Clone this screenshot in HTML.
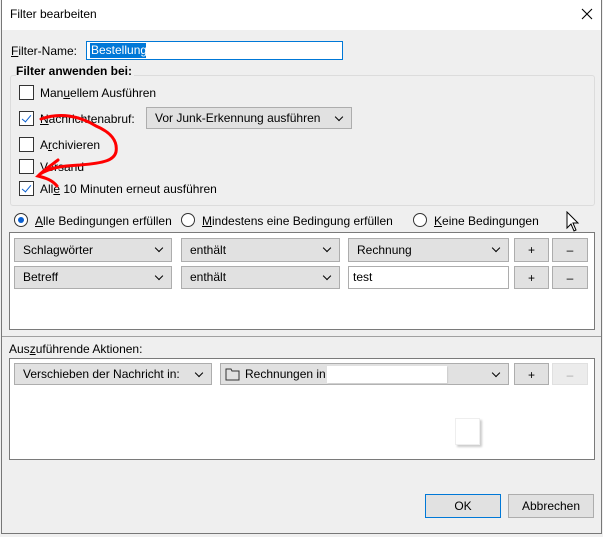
<!DOCTYPE html>
<html><head><meta charset="utf-8"><style>
*{box-sizing:border-box;margin:0;padding:0}
body{width:603px;height:537px;background:#f0f0f0;font-family:"Liberation Sans",sans-serif;font-size:12px;color:#000;position:relative;overflow:hidden}
.a{position:absolute}
.win{left:1px;top:0;width:601px;height:534px;background:#efefef;border:1px solid #777;border-top:none}
.title{left:2px;top:0;width:599px;height:30px;background:#fff}
.cb{width:15px;height:15px;border:1px solid #333;background:#fff}
.cb.c::after{content:"";position:absolute;left:4px;top:1px;width:4px;height:8px;border:solid #0a5fd0;border-width:0 1.5px 1.5px 0;transform:rotate(40deg)}
.dd{background:#e1e1e1;border:1px solid #adadad;padding-left:8px;line-height:21px;white-space:nowrap}
.dd::after{content:"";position:absolute;right:9px;top:6px;width:5px;height:5px;border:solid #000;border-width:0 1.6px 1.6px 0;transform:rotate(45deg)}
.btn{background:#e1e1e1;border:1px solid #adadad;text-align:center;line-height:22px}
.rad{width:14px;height:14px;border:1px solid #333;border-radius:50%;background:#fff}
u{text-decoration:underline}
</style></head><body>
<div class="a win"></div>
<div class="a title"></div>
<div class="a" style="left:10px;top:7px;font-size:12px">Filter bearbeiten</div>
<svg class="a" style="left:581px;top:8px" width="12" height="12"><path d="M1 1L11 11M11 1L1 11" stroke="#000" stroke-width="1.1"/></svg>
<div class="a" style="left:11px;top:44px"><u>F</u>ilter-Name:</div>
<div class="a" style="left:86px;top:41px;width:257px;height:19px;background:#fff;border:1px solid #0078d7"></div>
<div class="a" style="left:90px;top:43px;height:15px;width:56px;background:#0078d7;color:#fff;line-height:15px;padding-left:1px">Bestellung</div>
<div class="a" style="left:10px;top:75px;width:585px;height:131px;border:1px solid #dcdcdc;border-radius:3px"></div>
<div class="a" style="left:16px;top:64px;font-weight:bold;background:#efefef;padding-right:2px">Filter anwenden bei:</div>
<div class="a cb" style="left:19px;top:85px"></div><div class="a" style="left:40px;top:86px">Man<u>u</u>ellem Ausführen</div>
<div class="a cb c" style="left:19px;top:111px"></div><div class="a" style="left:40px;top:112px"><u>N</u>achrichtenabruf:</div>
<div class="a dd" style="left:146px;top:107px;width:206px;height:22px">Vor Junk-Erkennung ausführen</div>
<div class="a cb" style="left:19px;top:137px"></div><div class="a" style="left:40px;top:138px">A<u>r</u>chivieren</div>
<div class="a cb" style="left:19px;top:159px"></div><div class="a" style="left:40px;top:160px">Versand</div>
<div class="a cb c" style="left:19px;top:181px"></div><div class="a" style="left:40px;top:182px">All<u>e</u> 10 Minuten erneut ausführen</div>
<svg class="a" style="left:0;top:0" width="603" height="537"><path d="M41 119 C60 112 80 116 96 126 C110 132 118 140 116 152 C114 160 105 163 80 165 C60 166 50 168 40 174 M58 160 C50 166 44 170 38 176 C46 178 52 180 57 186" fill="none" stroke="#f00" stroke-width="3" stroke-linecap="round"/></svg>
<div class="a rad" style="left:14px;top:213px"><div class="a" style="left:3px;top:3px;width:6px;height:6px;border-radius:50%;background:#0a5fd0"></div></div>
<div class="a" style="left:35px;top:214px"><u>A</u>lle Bedingungen erfüllen</div>
<div class="a rad" style="left:181px;top:213px"></div><div class="a" style="left:202px;top:214px"><u>M</u>indestens eine Bedingung erfüllen</div>
<div class="a rad" style="left:413px;top:213px"></div><div class="a" style="left:434px;top:214px"><u>K</u>eine Bedingungen</div>
<svg class="a" style="left:566px;top:211px" width="14" height="22"><path d="M1 1V17L5 13L8 20L10 19L7 12H12Z" fill="#fff" stroke="#000"/></svg>
<div class="a" style="left:9px;top:232px;width:586px;height:98px;background:#fff;border:1px solid #7a7a7a"></div>
<div class="a dd" style="left:14px;top:238px;width:158px;height:24px;line-height:22px">Schlagwörter</div>
<div class="a dd" style="left:181px;top:238px;width:159px;height:24px;line-height:22px">enthält</div>
<div class="a dd" style="left:348px;top:238px;width:161px;height:24px;line-height:22px">Rechnung</div>
<div class="a btn" style="left:514px;top:238px;width:35px;height:24px">+</div>
<div class="a btn" style="left:552px;top:238px;width:36px;height:24px">–</div>
<div class="a dd" style="left:14px;top:266px;width:158px;height:23px">Betreff</div>
<div class="a dd" style="left:181px;top:266px;width:159px;height:23px">enthält</div>
<div class="a" style="left:348px;top:266px;width:161px;height:23px;background:#fff;border:1px solid #adadad;padding-left:4px;line-height:21px">test</div>
<div class="a btn" style="left:514px;top:266px;width:35px;height:23px">+</div>
<div class="a btn" style="left:552px;top:266px;width:36px;height:23px">–</div>
<div class="a" style="left:2px;top:336px;width:599px;height:1px;background:#a0a0a0"></div>
<div class="a" style="left:9px;top:342px">Aus<u>z</u>uführende Aktionen:</div>
<div class="a" style="left:9px;top:358px;width:586px;height:102px;background:#fff;border:1px solid #7a7a7a"></div>
<div class="a dd" style="left:14px;top:363px;width:198px;height:22px;line-height:20px">Verschieben der Nachricht in:</div>
<div class="a dd" style="left:220px;top:363px;width:289px;height:22px;line-height:20px;padding-left:24px">Rechnungen in</div>
<svg class="a" style="left:225px;top:368px" width="16" height="13"><path d="M1 1H6L7 3H14V12H1Z" fill="none" stroke="#333"/></svg>
<div class="a" style="left:327px;top:366px;width:120px;height:17px;background:#fff;box-shadow:1px 1px 1px #ccc"></div>
<div class="a btn" style="left:514px;top:363px;width:35px;height:22px">+</div>
<div class="a btn" style="left:552px;top:363px;width:36px;height:22px;background:#ececec;border-color:#e0e0e0;color:#aaa">–</div>
<div class="a" style="left:455px;top:418px;width:25px;height:27px;background:#fff;border:1px solid #eee;box-shadow:2px 2px 2px #ccc"></div>
<div class="a btn" style="left:425px;top:494px;width:76px;height:24px;border:1px solid #0078d7">OK</div>
<div class="a btn" style="left:508px;top:494px;width:86px;height:24px">Abbrechen</div>
</body></html>
